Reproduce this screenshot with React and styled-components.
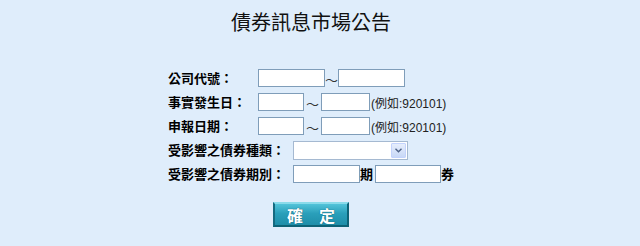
import React from "react";
import styled, { createGlobalStyle } from "styled-components";

const Global = createGlobalStyle`
  html, body { margin: 0; padding: 0; background: #dfedfb; }
  body { font-family: "Noto Sans CJK TC", "Noto Sans", sans-serif; color: #000; }
`;

const Page = styled.div`
  width: 622px;
  height: 246px;
  overflow: hidden;
`;

const Title = styled.h1`
  margin: 0;
  padding-top: 10px;
  font-size: 20px;
  line-height: 24px;
  font-weight: 400;
  text-align: center;
  color: #111;
`;

const Form = styled.div`
  width: 286px;
  margin: 32px auto 0;
  display: flex;
  flex-direction: column;
`;

const Row = styled.div`
  display: flex;
  align-items: center;
  height: 24px;
`;

const Label = styled.span`
  font-size: 13px;
  font-weight: 700;
  line-height: 16px;
  white-space: nowrap;
  width: ${(p) => (p.$w ? `${p.$w}px` : "auto")};
  flex: none;
  margin-right: ${(p) => (p.$gap ? `${p.$gap}px` : "0")};
`;

const Input = styled.input`
  box-sizing: border-box;
  width: ${(p) => p.$w}px;
  height: 18px;
  margin: 0;
  padding: 0 2px;
  border: 1px solid #7f9db9;
  background: #fff;
  flex: none;
`;

const Tilde = styled.span`
  width: ${(p) => p.$w}px;
  flex: none;
  text-align: center;
  font-size: 13px;
  line-height: 18px;
  color: #333;
  padding-top: 4px;
`;

const Hint = styled.span`
  font-size: 12px;
  font-family: "Liberation Sans", "Noto Sans CJK TC", sans-serif;
  white-space: nowrap;
  color: #222;
  margin-left: 1px;
`;

const Unit = styled.span`
  font-size: 13px;
  font-weight: 700;
  width: 15px;
  flex: none;
  line-height: 16px;
`;

const SelectBox = styled.div`
  box-sizing: border-box;
  width: 115px;
  height: 19px;
  border: 1px solid #a5b9d1;
  background: #fff;
  display: flex;
  justify-content: flex-end;
  padding: 1px;
  flex: none;
`;

const Arrow = styled.div`
  width: 15px;
  height: 15px;
  box-sizing: border-box;
  border: 1px solid #c3d3fd;
  background: linear-gradient(#e6eefc, #c8d8f7);
  border-radius: 1px;
  display: flex;
  align-items: center;
  justify-content: center;
`;

const ButtonRow = styled.div`
  display: flex;
  justify-content: center;
  margin-top: 16px;
`;

const Button = styled.button`
  box-sizing: border-box;
  width: 76px;
  height: 25px;
  margin: 0;
  padding: 0;
  border: 2px solid;
  border-color: #8adbea #0d6276 #0d6276 #156a80;
  background: linear-gradient(#52c3d9, #2a9fba 45%, #1e8ea9);
  color: #fff;
  font-family: "Noto Sans CJK TC", sans-serif;
  font-size: 16px;
  font-weight: 700;
  line-height: 20px;
  text-shadow: 0 0 1px #05485a;
`;

export default function App() {
  return (
    <>
      <Global />
      <Page>
        <Title>債券訊息市場公告</Title>
        <Form>
          <Row>
            <Label $w={90}>公司代號：</Label>
            <Input $w={67} />
            <Tilde $w={13}>～</Tilde>
            <Input $w={67} />
          </Row>
          <Row>
            <Label $w={90}>事實發生日：</Label>
            <Input $w={46} />
            <Tilde $w={17}>～</Tilde>
            <Input $w={49} />
            <Hint>(例如:920101)</Hint>
          </Row>
          <Row>
            <Label $w={90}>申報日期：</Label>
            <Input $w={46} />
            <Tilde $w={17}>～</Tilde>
            <Input $w={49} />
            <Hint>(例如:920101)</Hint>
          </Row>
          <Row>
            <Label $gap={8}>受影響之債券種類：</Label>
            <SelectBox>
              <Arrow>
                <svg width="7" height="5" viewBox="0 0 7 5">
                  <path d="M0.5 0.8 L3.5 3.8 L6.5 0.8" fill="none" stroke="#4d6185" strokeWidth="1.4" />
                </svg>
              </Arrow>
            </SelectBox>
          </Row>
          <Row>
            <Label $gap={8}>受影響之債券期別：</Label>
            <Input $w={67} />
            <Unit>期</Unit>
            <Input $w={66} />
            <Unit>券</Unit>
          </Row>
        </Form>
        <ButtonRow>
          <Button>確　定</Button>
        </ButtonRow>
      </Page>
    </>
  );
}
